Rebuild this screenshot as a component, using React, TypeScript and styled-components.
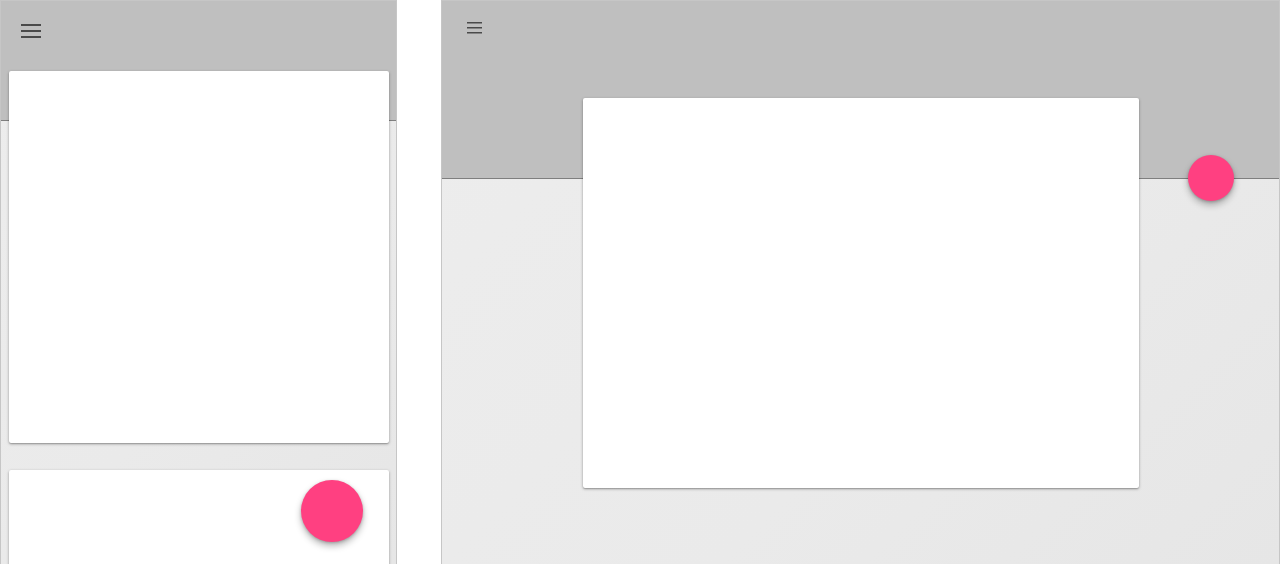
import * as React from "react";
import styled, { createGlobalStyle } from "styled-components";

const GlobalStyle = createGlobalStyle`
  html, body {
    margin: 0;
    padding: 0;
    background: #ffffff;
    font-family: "Roboto", "Liberation Sans", sans-serif;
  }
`;

const Page = styled.div`
  display: flex;
  align-items: flex-start;
  gap: 44px;
  width: 1280px;
  height: 564px;
  overflow: hidden;
`;

interface FrameProps {
  $width: number;
}

const Frame = styled.div<FrameProps>`
  position: relative;
  display: flex;
  flex-direction: column;
  width: ${(p) => p.$width}px;
  height: 564px;
  box-sizing: border-box;
  border: 1px solid #c6c6c6;
  border-bottom: none;
  background: linear-gradient(135deg, #ededed 0%, #eaeaea 60%, #e6e6e6 100%);
  overflow: hidden;
`;

interface BarProps {
  $height: number;
  $padTop: number;
  $padLeft: number;
}

const TopBar = styled.div<BarProps>`
  flex: none;
  height: ${(p) => p.$height}px;
  padding: ${(p) => p.$padTop}px 0 0 ${(p) => p.$padLeft}px;
  box-sizing: border-box;
  background: #bfbfbf;
  border-bottom: 1px solid #7f7f7f;
`;

const PhoneContent = styled.div`
  display: flex;
  flex-direction: column;
  gap: 27px;
  margin-top: -50px;
  padding: 0 7px 0 8px;
`;

const TabletContent = styled.div`
  display: flex;
  justify-content: center;
  margin-top: -81px;
`;

interface CardProps {
  $width?: number;
  $height: number;
}

const Card = styled.div<CardProps>`
  flex: none;
  width: ${(p) => (p.$width ? `${p.$width}px` : "auto")};
  height: ${(p) => p.$height}px;
  background: #ffffff;
  border-radius: 2px;
  box-shadow: 0 1px 3px rgba(0, 0, 0, 0.35), 0 1px 1px rgba(0, 0, 0, 0.12);
`;

interface FabProps {
  $size: number;
  $left: number;
  $top: number;
}

const Fab = styled.button<FabProps>`
  position: absolute;
  left: ${(p) => p.$left}px;
  top: ${(p) => p.$top}px;
  width: ${(p) => p.$size}px;
  height: ${(p) => p.$size}px;
  padding: 0;
  border: none;
  border-radius: 50%;
  background: #ff4081;
  box-shadow: 0 4px 7px rgba(0, 0, 0, 0.28), 0 1px 3px rgba(0, 0, 0, 0.2);
`;

const MenuIcon = ({ width, gap, stroke }: { width: number; gap: number; stroke: number }) => (
  <svg width={width} height={gap * 2 + stroke} style={{ display: "block" }}>
    {[0, 1, 2].map((i) => (
      <rect key={i} x={0} y={i * gap} width={width} height={stroke} fill="#4a4a4a" />
    ))}
  </svg>
);

export default function App() {
  return (
    <Page>
      <GlobalStyle />
      <Frame $width={397}>
        <TopBar $height={120} $padTop={23} $padLeft={20}>
          <MenuIcon width={20} gap={6} stroke={2} />
        </TopBar>
        <PhoneContent>
          <Card $height={372} />
          <Card $height={200} />
        </PhoneContent>
        <Fab $size={62} $left={300} $top={479} aria-label="add" />
      </Frame>
      <Frame $width={839}>
        <TopBar $height={178} $padTop={21} $padLeft={25}>
          <MenuIcon width={15} gap={5} stroke={1.5} />
        </TopBar>
        <TabletContent>
          <Card $width={556} $height={390} />
        </TabletContent>
        <Fab $size={46} $left={746} $top={154} aria-label="add" />
      </Frame>
    </Page>
  );
}
